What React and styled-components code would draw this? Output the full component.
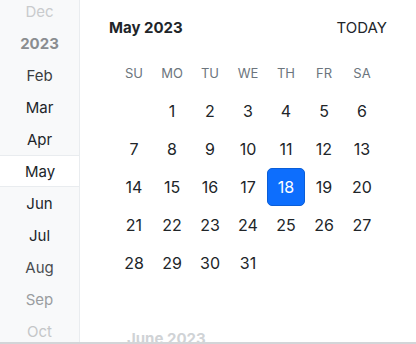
import React from "react";
import styled, { createGlobalStyle } from "styled-components";

const Global = createGlobalStyle`
  html, body { margin: 0; padding: 0; background: #fff; }
  body { font-family: Inter, "Noto Sans", sans-serif; -webkit-font-smoothing: antialiased; }
`;

const Frame = styled.div`
  width: 416px;
  height: 344px;
  display: flex;
  overflow: hidden;
  box-sizing: border-box;
  border-bottom: 2px solid #d3d5d8;
`;

const Sidebar = styled.div`
  width: 80px;
  flex: none;
  background: #f8f9fa;
  border-right: 1px solid #e9ecef;
  box-sizing: border-box;
  overflow: hidden;
`;

const MonthList = styled.ul`
  list-style: none;
  margin: -5px 0 0;
  padding: 0;
`;

const MonthItem = styled.li`
  height: 32px;
  display: flex;
  align-items: center;
  justify-content: center;
  font-size: 15px;
  box-sizing: border-box;
  color: ${(p) => p.$color || "#212529"};
  font-weight: ${(p) => (p.$year ? 700 : 400)};
  ${(p) =>
    p.$active &&
    `
    background: #fff;
    margin-right: -1px;
    border-top: 1px solid #e9ecef;
    border-bottom: 1px solid #e9ecef;
  `}
`;

const Panel = styled.div`
  flex: 1;
  display: flex;
  flex-direction: column;
  overflow: hidden;
`;

const Header = styled.div`
  height: 54px;
  flex: none;
  display: flex;
  align-items: center;
  justify-content: space-between;
  padding: 0 29px;
`;

const Title = styled.div`
  font-size: 15px;
  font-weight: 700;
  color: ${(p) => (p.$muted ? "#d0d3d6" : "#212529")};
`;

const TodayButton = styled.button`
  border: 0;
  background: none;
  padding: 0;
  font-family: inherit;
  font-size: 15px;
  color: #212529;
  cursor: pointer;
`;

const Grid = styled.div`
  display: grid;
  grid-template-columns: repeat(7, 38px);
  grid-auto-rows: 38px;
  justify-content: center;
`;

const WeekDay = styled.div`
  display: flex;
  align-items: center;
  justify-content: center;
  font-size: 13px;
  color: #6c757d;
`;

const Day = styled.div`
  display: flex;
  align-items: center;
  justify-content: center;
  font-size: 16px;
  box-sizing: border-box;
  border-radius: 5px;
  color: ${(p) => (p.$selected ? "#fff" : "#212529")};
  background: ${(p) => (p.$selected ? "#0d6efd" : "transparent")};
  border: 1px solid ${(p) => (p.$selected ? "#0b5ed7" : "transparent")};
`;

const NextHeader = styled.div`
  margin-top: 47px;
  padding-left: 47px;
`;

const months = [
  { label: "Dec", color: "#c9cbcd" },
  { label: "2023", color: "#8a8d90", year: true },
  { label: "Feb", color: "#3a3d40" },
  { label: "Mar" },
  { label: "Apr" },
  { label: "May", active: true },
  { label: "Jun" },
  { label: "Jul" },
  { label: "Aug", color: "#4a4d50" },
  { label: "Sep", color: "#9a9da0" },
  { label: "Oct", color: "#c4c6c8" },
];

const weekdays = ["SU", "MO", "TU", "WE", "TH", "FR", "SA"];

export default function App() {
  const cells = [null];
  for (let d = 1; d <= 31; d++) cells.push(d);
  return (
    <>
      <Global />
      <Frame>
        <Sidebar>
          <MonthList>
            {months.map((m) => (
              <MonthItem key={m.label} $color={m.color} $year={m.year} $active={m.active}>
                {m.label}
              </MonthItem>
            ))}
          </MonthList>
        </Sidebar>
        <Panel>
          <Header>
            <Title>May 2023</Title>
            <TodayButton>TODAY</TodayButton>
          </Header>
          <Grid>
            {weekdays.map((w) => (
              <WeekDay key={w}>{w}</WeekDay>
            ))}
            {cells.map((d, i) => (
              <Day key={i} $selected={d === 18}>
                {d}
              </Day>
            ))}
          </Grid>
          <NextHeader>
            <Title $muted>June 2023</Title>
          </NextHeader>
        </Panel>
      </Frame>
    </>
  );
}
